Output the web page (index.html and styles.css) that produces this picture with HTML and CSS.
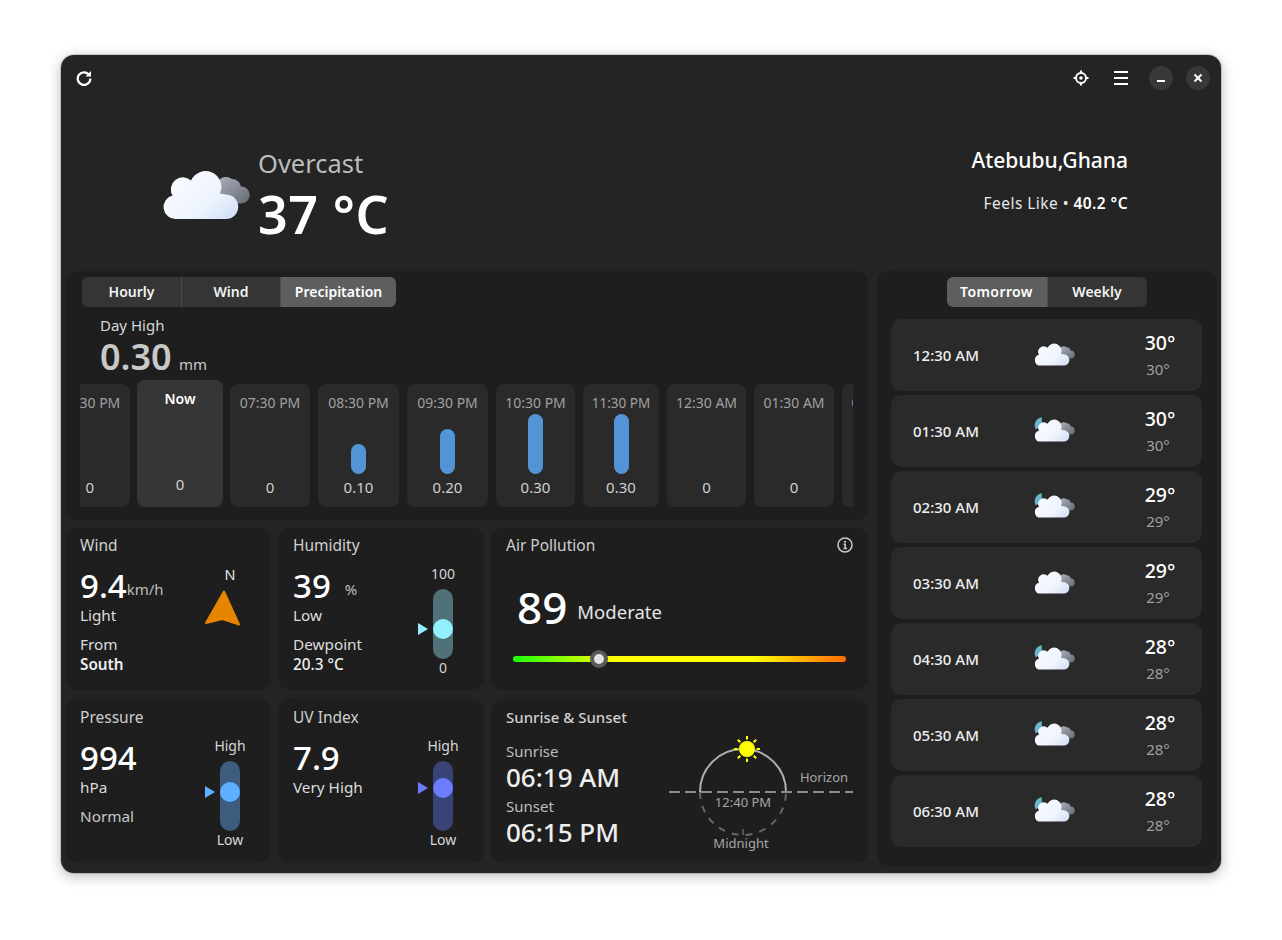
FILE: index.html
```html
<!DOCTYPE html>
<html lang="en">
<head>
<meta charset="utf-8">
<title>Weather</title>
<link rel="stylesheet" href="styles.css">
</head>
<body>
<svg class="defs" width="0" height="0" aria-hidden="true">
  <defs>
    <linearGradient id="front" gradientUnits="userSpaceOnUse" x1="20" y1="8" x2="62" y2="52">
      <stop offset="0" stop-color="#f7faff"/><stop offset="0.6" stop-color="#eef4fe"/><stop offset="1" stop-color="#d5e2f5"/>
    </linearGradient>
    <linearGradient id="back" gradientUnits="userSpaceOnUse" x1="60" y1="8" x2="80" y2="34">
      <stop offset="0" stop-color="#a4a9b3"/><stop offset="1" stop-color="#6c717c"/>
    </linearGradient>
    <symbol id="cloud" viewBox="0 0 88 52" overflow="visible">
      <path fill="url(#back)" d="M56 11A10 10 0 0 1 70 9A9 9 0 0 1 79 16.500A8.500 8.500 0 0 1 79.500 33.500H60Z"/>
      <path fill="url(#front)" d="M14 49A12 12 0 0 1 10.500 25.400A12 12 0 0 1 29 10.500A15.600 15.600 0 0 1 58 23.500L64 24.500A12.250 12.250 0 0 1 64 49Z"/>
    </symbol>
    <symbol id="cloud-moon" viewBox="0 0 88 52" overflow="visible">
      <path fill="#6db4d1" d="M17 -4A18 18 0 0 0 3 22L20 14A22 22 0 0 1 17 -4Z"/>
      <path fill="url(#back)" d="M56 11A10 10 0 0 1 70 9A9 9 0 0 1 79 16.500A8.500 8.500 0 0 1 79.500 33.500H60Z"/>
      <path fill="url(#front)" d="M14 49A12 12 0 0 1 10.500 25.400A12 12 0 0 1 29 10.500A15.600 15.600 0 0 1 58 23.500L64 24.500A12.250 12.250 0 0 1 64 49Z"/>
    </symbol>
  </defs>
</svg>
<div class="window">
  <header class="titlebar">
    <svg class="icon-16" viewBox="0 0 16 16" fill="none" stroke="#fff" stroke-width="2.200"><path d="M13.300 5.200A6.300 6.300 0 1 0 14.300 8.500"/><path d="M15 1V6.500H9.500Z" fill="#fff" stroke="none"/></svg>
    <div class="spacer"></div>
    <svg class="icon-16 locate" viewBox="0 0 16 16" fill="none" stroke="#fff"><circle cx="8" cy="8" r="5" stroke-width="2"/><circle cx="8" cy="8" r="1.800" fill="#fff" stroke="none"/><path d="M8 .5V3M8 13V15.500M.5 8H3M13 8H15.500" stroke-width="2"/></svg>
    <div class="hamburger"><span></span><span></span><span></span></div>
    <div class="round-btn btn-min"><span class="min-bar"></span></div>
    <div class="round-btn btn-close"><svg width="10" height="10" viewBox="0 0 10 10" stroke="#fff" stroke-width="2"><path d="M1.500 1.500L8.500 8.500M8.500 1.500L1.500 8.500"/></svg></div>
  </header>

  <section class="hero">
    <div class="hero-left">
      <svg class="hero-icon"><use href="#cloud"/></svg>
      <div class="hero-text">
        <div class="hero-cond">Overcast</div>
        <div class="hero-temp">37 °C</div>
      </div>
    </div>
    <div class="hero-right">
      <div class="hero-place">Atebubu,Ghana</div>
      <div class="hero-feels">Feels Like • <b>40.2 °C</b></div>
    </div>
  </section>

  <main class="main">
    <div class="left-col">
      <section class="card forecast">
        <div class="tabs">
          <div class="tab w99">Hourly</div>
          <div class="tab w99">Wind</div>
          <div class="tab active w116">Precipitation</div>
        </div>
        <div class="day-high">
          <div class="dh-label">Day High</div>
          <div class="dh-value">0.30 <span class="dh-unit">mm</span></div>
        </div>
        <div class="hours">
          <div class="hour cut"><div class="h-time">06:30 PM</div><div class="h-bar-area"></div><div class="h-val left">0</div></div>
          <div class="hour now"><div class="h-time">Now</div><div class="h-bar-area"></div><div class="h-val">0</div></div>
          <div class="hour i80"><div class="h-time">07:30 PM</div><div class="h-bar-area"></div><div class="h-val">0</div></div>
          <div class="hour i81"><div class="h-time">08:30 PM</div><div class="h-bar-area"><div class="bar b1"></div></div><div class="h-val">0.10</div></div>
          <div class="hour i81"><div class="h-time">09:30 PM</div><div class="h-bar-area"><div class="bar b2"></div></div><div class="h-val">0.20</div></div>
          <div class="hour i79"><div class="h-time">10:30 PM</div><div class="h-bar-area"><div class="bar b3"></div></div><div class="h-val">0.30</div></div>
          <div class="hour i76"><div class="h-time">11:30 PM</div><div class="h-bar-area"><div class="bar b3"></div></div><div class="h-val">0.30</div></div>
          <div class="hour i79"><div class="h-time">12:30 AM</div><div class="h-bar-area"></div><div class="h-val">0</div></div>
          <div class="hour i80"><div class="h-time">01:30 AM</div><div class="h-bar-area"></div><div class="h-val">0</div></div>
          <div class="hour i80"><div class="h-time">02:30 AM</div><div class="h-bar-area"></div></div>
        </div>
      </section>

      <div class="tiles">
        <section class="card tile row-a wind-tile">
          <div class="tile-title">Wind</div>
          <div class="tile-split">
            <div>
              <div class="big-line"><span class="big">9.4</span><span class="unit">km/h</span></div>
              <div class="line">Light</div>
              <div class="line gap">From</div>
              <div class="line strong">South</div>
            </div>
            <div class="compass">
              <div class="compass-n">N</div>
              <svg width="38" height="38" viewBox="0 0 38 38"><path d="M20 2.500L35 35.500L18.500 30L2 34Z" fill="#e68600" stroke="#e68600" stroke-linejoin="round" stroke-width="2"/></svg>
            </div>
          </div>
        </section>

        <section class="card tile row-a">
          <div class="tile-title">Humidity</div>
          <div class="tile-split">
            <div>
              <div class="big-line"><span class="big">39</span><span class="unit pct">%</span></div>
              <div class="line">Low</div>
              <div class="line gap">Dewpoint</div>
              <div class="line semi">20.3 °C</div>
            </div>
            <div class="gauge">
              <div class="g-label">100</div>
              <div class="g-track track-hum"><div class="g-marker hum-pos"><i class="tri tri-hum"></i><i class="knob knob-hum"></i></div></div>
              <div class="g-label">0</div>
            </div>
          </div>
        </section>

        <section class="card tile row-a air">
          <div class="tile-title title-row">Air Pollution
            <svg class="info" width="16" height="16" viewBox="0 0 16 16" fill="none" stroke="#ccc"><circle cx="8" cy="8" r="7" stroke-width="1.500"/><path d="M6.500 7.200H8.200V11.500M6.500 11.500H10" stroke-width="1.500"/><circle cx="8" cy="4.800" r="1.100" fill="#ccc" stroke="none"/></svg>
          </div>
          <div class="air-value"><span class="air-num">89</span><span class="air-label">Moderate</span></div>
          <div class="air-bar"><i class="air-knob"></i></div>
        </section>

        <section class="card tile row-b wind-tile">
          <div class="tile-title">Pressure</div>
          <div class="tile-split">
            <div>
              <div class="big-line"><span class="big">994</span></div>
              <div class="line">hPa</div>
              <div class="line gap dim">Normal</div>
            </div>
            <div class="gauge">
              <div class="g-label">High</div>
              <div class="g-track track-pre"><div class="g-marker pre-pos"><i class="tri tri-pre"></i><i class="knob knob-pre"></i></div></div>
              <div class="g-label">Low</div>
            </div>
          </div>
        </section>

        <section class="card tile row-b">
          <div class="tile-title">UV Index</div>
          <div class="tile-split">
            <div>
              <div class="big-line"><span class="big">7.9</span></div>
              <div class="line">Very High</div>
            </div>
            <div class="gauge">
              <div class="g-label">High</div>
              <div class="g-track track-uv"><div class="g-marker uv-pos"><i class="tri tri-uv"></i><i class="knob knob-uv"></i></div></div>
              <div class="g-label">Low</div>
            </div>
          </div>
        </section>

        <section class="card tile row-b sun-tile">
          <div class="sun-text">
            <div class="tile-title semi-title">Sunrise &amp; Sunset</div>
            <div class="sun-label first">Sunrise</div>
            <div class="sun-time">06:19 AM</div>
            <div class="sun-label second">Sunset</div>
            <div class="sun-time">06:15 PM</div>
          </div>
          <svg class="sun-svg" width="184" height="116" viewBox="0 0 184 116">
            <path d="M31 57A43 43 0 0 0 117 57" fill="none" stroke="#666" stroke-width="2" stroke-dasharray="7 7"/>
            <path d="M31 57A43 43 0 0 1 117 57" fill="none" stroke="#b0b0b0" stroke-width="2"/>
            <path d="M0 57H184" stroke="#8c8c8c" stroke-width="2" stroke-dasharray="11 5"/>
            <path d="M74 94V100" stroke="#666" stroke-width="1.500"/>
            <circle cx="78" cy="14" r="8" fill="#ff0"/>
            <path d="M78 1V4.500M78 23.500V27M65 14H68.500M87.500 14H91M68.800 4.800L71.300 7.300M84.700 20.700L87.200 23.200M87.200 4.800L84.700 7.300M71.300 20.700L68.800 23.200" stroke="#ff0" stroke-width="2"/>
            <text class="sun-note" x="155" y="47" text-anchor="middle">Horizon</text>
            <text class="sun-note" x="74" y="72" text-anchor="middle">12:40 PM</text>
            <text class="sun-note" x="72" y="113" text-anchor="middle">Midnight</text>
          </svg>
        </section>
      </div>
    </div>

    <aside class="card right-col">
      <div class="tabs center">
        <div class="tab active w100 wide">Tomorrow</div>
        <div class="tab w100">Weekly</div>
      </div>
      <div class="rows">
        <div class="row"><div class="r-time">12:30 AM</div><svg class="r-icon"><use href="#cloud"/></svg><div class="r-temp"><div class="r-hi">30°</div><div class="r-lo">30°</div></div></div>
        <div class="row"><div class="r-time">01:30 AM</div><svg class="r-icon"><use href="#cloud-moon"/></svg><div class="r-temp"><div class="r-hi">30°</div><div class="r-lo">30°</div></div></div>
        <div class="row"><div class="r-time">02:30 AM</div><svg class="r-icon"><use href="#cloud-moon"/></svg><div class="r-temp"><div class="r-hi">29°</div><div class="r-lo">29°</div></div></div>
        <div class="row"><div class="r-time">03:30 AM</div><svg class="r-icon"><use href="#cloud"/></svg><div class="r-temp"><div class="r-hi">29°</div><div class="r-lo">29°</div></div></div>
        <div class="row"><div class="r-time">04:30 AM</div><svg class="r-icon"><use href="#cloud-moon"/></svg><div class="r-temp"><div class="r-hi">28°</div><div class="r-lo">28°</div></div></div>
        <div class="row"><div class="r-time">05:30 AM</div><svg class="r-icon"><use href="#cloud-moon"/></svg><div class="r-temp"><div class="r-hi">28°</div><div class="r-lo">28°</div></div></div>
        <div class="row"><div class="r-time">06:30 AM</div><svg class="r-icon"><use href="#cloud-moon"/></svg><div class="r-temp"><div class="r-hi">28°</div><div class="r-lo">28°</div></div></div>
      </div>
    </aside>
  </main>
</div>
</body>
</html>
```

FILE: styles.css
```css
* { box-sizing: border-box; }
html, body { margin: 0; height: 100%; }
body {
  background: #fff;
  padding: 55px 61px 67px;
  font-family: "Noto Sans", sans-serif;
  color: #fff;
  font-size: 14px;
  overflow: hidden;
}
.defs { display: block; height: 0; }
.window {
  width: 1160px;
  height: 818px;
  background: #242424;
  border-radius: 13px;
  box-shadow: 0 3px 14px rgba(0,0,0,.28), 0 0 0 1px rgba(0,0,0,.15);
  display: flex;
  flex-direction: column;
  overflow: hidden;
}

/* title bar */
.titlebar { height: 46px; padding: 0 11px 0 15px; display: flex; align-items: center; flex: none; }
.spacer { flex: 1; }
.icon-16 { width: 16px; height: 16px; flex: none; }
.locate { margin-right: 25px; }
.hamburger { width: 14px; display: flex; flex-direction: column; gap: 4px; margin-right: 21px; }
.hamburger span { height: 2px; background: #fff; display: block; }
.round-btn { width: 24px; height: 24px; border-radius: 50%; background: #383838; display: flex; align-items: center; justify-content: center; }
.btn-min { margin-right: 13px; }
.min-bar { width: 8px; height: 2px; background: #fff; margin-top: 6px; }

/* hero */
.hero { height: 169px; flex: none; display: flex; justify-content: space-between; padding: 0 93px 0 101px; }
.hero-left { display: flex; align-items: flex-start; padding-top: 46px; }
.hero-icon { width: 88px; height: 52px; margin-top: 23px; margin-right: 8px; overflow: visible; }
.hero-text { display: flex; flex-direction: column; }
.hero-cond { font-size: 25.500px; line-height: 33px; color: #bdbdbd; }
.hero-temp { font-size: 52px; line-height: 62px; font-weight: 600; margin-top: 3px; letter-spacing: .6px; }
.hero-right { text-align: right; padding-top: 45px; }
.hero-place { font-size: 21px; line-height: 28px; font-weight: 500; }
.hero-feels { font-size: 15.500px; line-height: 20px; letter-spacing: .45px; margin-top: 19px; color: #e6e6e6; }
.hero-feels b { font-weight: 600; color: #fff; }

/* main layout */
.main { flex: 1; display: grid; grid-template-columns: 802px 340px; column-gap: 9px; padding: 1px 4px 7px 5px; min-height: 0; }
.left-col { display: flex; flex-direction: column; gap: 8px; min-width: 0; }
.card { background: #1e1e1e; border-radius: 12px; }
.forecast { height: 249px; padding: 6px 14px 0 14px; flex: none; overflow: hidden; }
.forecast > .tabs { margin-left: 2px; }

/* tabs */
.tabs { display: flex; height: 30px; }
.tabs.center { justify-content: center; }
.tab { background: #353535; font-size: 14px; font-weight: 600; line-height: 30px; text-align: center; border-left: 1px solid #4a4a4a; color: #f2f2f2; }
.tab:first-child { border-left: 0; border-radius: 6px 0 0 6px; }
.tab:last-child { border-radius: 0 6px 6px 0; }
.tab.active { background: #5e5e5e; color: #fff; }
.tab.wide { letter-spacing: .4px; }
.w99 { width: 99px; }
.w100 { width: 100px; }
.w116 { width: 116px; }

.day-high { padding-left: 20px; margin-top: 8px; }
.dh-label { font-size: 15px; line-height: 20px; color: #d6d6d6; }
.dh-value { font-size: 36px; line-height: 40px; font-weight: 600; color: #c8c8c8; margin-top: 2px; }
.dh-unit { font-size: 15px; font-weight: 400; color: #c8c8c8; margin-left: -2px; }

.hours { display: flex; gap: 8px; align-items: flex-end; width: 773px; margin-top: -4px; overflow: hidden; }
.hour { flex: none; height: 123px; background: #2a2a2a; border-radius: 8px; display: flex; flex-direction: column; align-items: center; padding: 10px 0; }
.i76 { width: 76px; } .i79 { width: 79px; } .i80 { width: 80px; } .i81 { width: 81px; }
.hour.cut { width: 80px; margin-left: -30px; margin-right: -1px; }
.h-time { font-size: 14px; line-height: 18px; color: #a0a0a0; white-space: nowrap; }
.i76 .h-time { font-size: 13.500px; }
.h-bar-area { flex: 1; display: flex; align-items: flex-end; padding-bottom: 3px; }
.h-val { font-size: 15px; line-height: 20px; color: #d0d0d0; }
.h-val.left { align-self: flex-end; margin-right: 36px; }
.hour.now { width: 86px; height: 127px; background: #363636; padding-bottom: 13px; margin-right: -1px; }
.hour.now .h-time { color: #fff; font-weight: 600; font-size: 14px; }
.bar { width: 15px; border-radius: 8px; background: #5294d6; }
.b1 { height: 30px; } .b2 { height: 45px; } .b3 { height: 60px; }

/* tiles */
.tiles { display: grid; grid-template-columns: 205px 206px 377px; grid-template-rows: 162px 164px; column-gap: 7px; row-gap: 9px; }
.tile { padding: 7px 15px 0; }
.tile.row-b { padding-top: 8px; }
.tile.wind-tile { padding-left: 14px; padding-right: 14px; }
.tile-title { font-size: 15.500px; line-height: 20px; color: #cfcfcf; }
.semi-title { font-weight: 500; font-size: 15px; }
.title-row { display: flex; justify-content: space-between; align-items: center; }
.info { margin-right: 0; }
.tile-split { display: flex; justify-content: space-between; }
.big-line { height: 38px; margin-top: 12px; display: flex; align-items: center; }
.big { font-size: 33px; line-height: 38px; font-weight: 500; }
.unit { font-size: 15px; color: #bdbdbd; margin-top: 6px; }
.pct { margin-left: 14px; font-size: 15px; }
.line { font-size: 15.300px; line-height: 20px; color: #dcdcdc; }
.line.gap { margin-top: 9px; }
.line.dim { color: #c8c8c8; }
.line.strong { font-weight: 600; color: #eee; }
.line.semi { font-weight: 500; color: #eee; }
.compass { display: flex; flex-direction: column; align-items: center; margin-right: 15px; margin-top: 9px; }
.compass-n { font-size: 14.500px; line-height: 20px; color: #e6e6e6; margin-left: 14px; }
.compass svg { margin-top: 5px; }

/* gauge */
.gauge { display: flex; flex-direction: column; align-items: center; width: 40px; margin-right: 6px; margin-top: 9px; }
.wind-tile .gauge { margin-right: 7px; }
.g-label { font-size: 14px; line-height: 20px; color: #d6d6d6; }
.g-track { width: 20px; height: 70px; border-radius: 10px; position: relative; margin: 5px 0 -1px; }
.g-marker { position: absolute; left: 0; }
.hum-pos { top: 30px; } .pre-pos { top: 21px; } .uv-pos { top: 17px; }
.knob { display: block; width: 20px; height: 20px; border-radius: 50%; }
.tri { position: absolute; left: -15px; top: 4px; width: 0; height: 0; border-style: solid; border-width: 6px 0 6px 10px; border-color: transparent; }
.track-hum { background: #4f7177; } .knob-hum { background: #92efff; } .tri-hum { border-left-color: #92efff; }
.track-pre { background: #3c5d7e; } .knob-pre { background: #5cb0ff; } .tri-pre { border-left-color: #5cb0ff; }
.track-uv { background: #3a4376; } .knob-uv { background: #6b7cff; } .tri-uv { border-left-color: #6b7cff; }

/* air */
.air { display: flex; flex-direction: column; }
.air-value { display: flex; align-items: center; padding-left: 11px; margin-top: 24px; height: 56px; }
.air-num { font-size: 44px; line-height: 56px; font-weight: 500; }
.air-label { font-size: 18.500px; margin: 8px 0 0 10px; color: #e4e4e4; }
.air-bar { margin: 21px 7px 0 7px; height: 6px; border-radius: 3px; position: relative; background: linear-gradient(90deg, #1cff00 0%, #ffff00 30%, #ffff00 72%, #ff6a00 100%); }
.air-knob { position: absolute; left: 77px; top: -6px; width: 18px; height: 18px; border-radius: 50%; background: #e4e4e4; border: 4px solid #5a5a5a; }

/* sun */
.sun-tile { display: flex; justify-content: space-between; }
.sun-label { font-size: 15px; line-height: 20px; color: #bdbdbd; }
.sun-label.first { margin-top: 14px; }
.sun-label.second { margin-top: 3px; }
.sun-time { font-size: 26px; line-height: 32px; font-weight: 500; color: #eee; }
.sun-svg { margin: 28px 0 0 0; overflow: visible; }
.sun-note { font-size: 13px; fill: #a6a6a6; font-family: "Noto Sans", sans-serif; }

/* right */
.right-col { padding: 6px 15px 0 14px; }
.rows { margin-top: 12px; display: flex; flex-direction: column; gap: 4px; }
.row { height: 72px; background: #2a2a2a; border-radius: 10px; display: flex; align-items: center; padding: 0 26px 0 22px; }
.r-time { width: 121px; font-size: 15px; font-weight: 500; color: #f0f0f0; padding-bottom: 1px; }
.r-icon { width: 41px; height: 24px; overflow: visible; }
.r-temp { margin-left: auto; width: 32px; text-align: center; }
.r-hi { font-size: 19.500px; line-height: 24px; font-weight: 500; }
.r-lo { font-size: 15px; line-height: 20px; color: #a0a0a0; margin-top: 4px; margin-left: -4px; }
```
